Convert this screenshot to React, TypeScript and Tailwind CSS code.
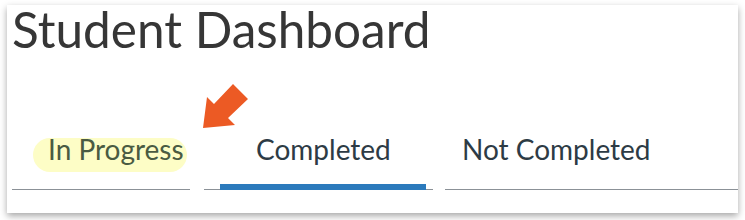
import React from 'react';

export default function App() {
    return (
        <main className="min-h-[220px] w-[745px] bg-white pl-[7px] pt-[5px]" style={{ fontFamily: 'Lato, "Noto Sans", sans-serif' }}>
            <div className="relative h-[208px] w-[731px] bg-white pl-[5px] shadow-[0_3px_7px_rgba(0,0,0,0.35)]">
                <h1 className="h-[50px] text-[49.5px] leading-none font-normal text-[#363636]">Student Dashboard</h1>

                <div className="mt-[80px] flex">
                    <div className="relative flex h-[55px] w-[178px] flex-col border-b border-[#8b9197] pl-[36px]">
                        <span className="absolute top-[3px] left-[21px] h-[34px] w-[154px] rounded-full bg-[#fdfdc6]" />
                        <span className="relative text-[28px] leading-none text-[#4a5b42]">In Progress</span>
                    </div>

                    <div className="ml-[14px] flex h-[55px] w-[229px] flex-col border-b border-[#8b9197]">
                        <span className="pl-[52px] text-[28px] leading-none text-[#2d3b45]">Completed</span>
                        <div className="relative mt-auto -mb-[1px] ml-[16px] mr-[7px] h-[6px] bg-[#2b7abc]" />
                    </div>

                    <div className="ml-[12px] flex h-[55px] flex-1 flex-col border-b border-[#8b9197] pl-[17px]">
                        <span className="text-[28px] leading-none text-[#2d3b45]">Not Completed</span>
                    </div>
                </div>

                <svg className="absolute left-[188px] top-[75px]" width="60" height="55" viewBox="195 80 60 55">
                    <polygon
                        points="203,128 207,97 214,104 233,84 248,99 228,118 235,125"
                        fill="#ec5a24"
                    />
                </svg>
            </div>
        </main>
    );
}
